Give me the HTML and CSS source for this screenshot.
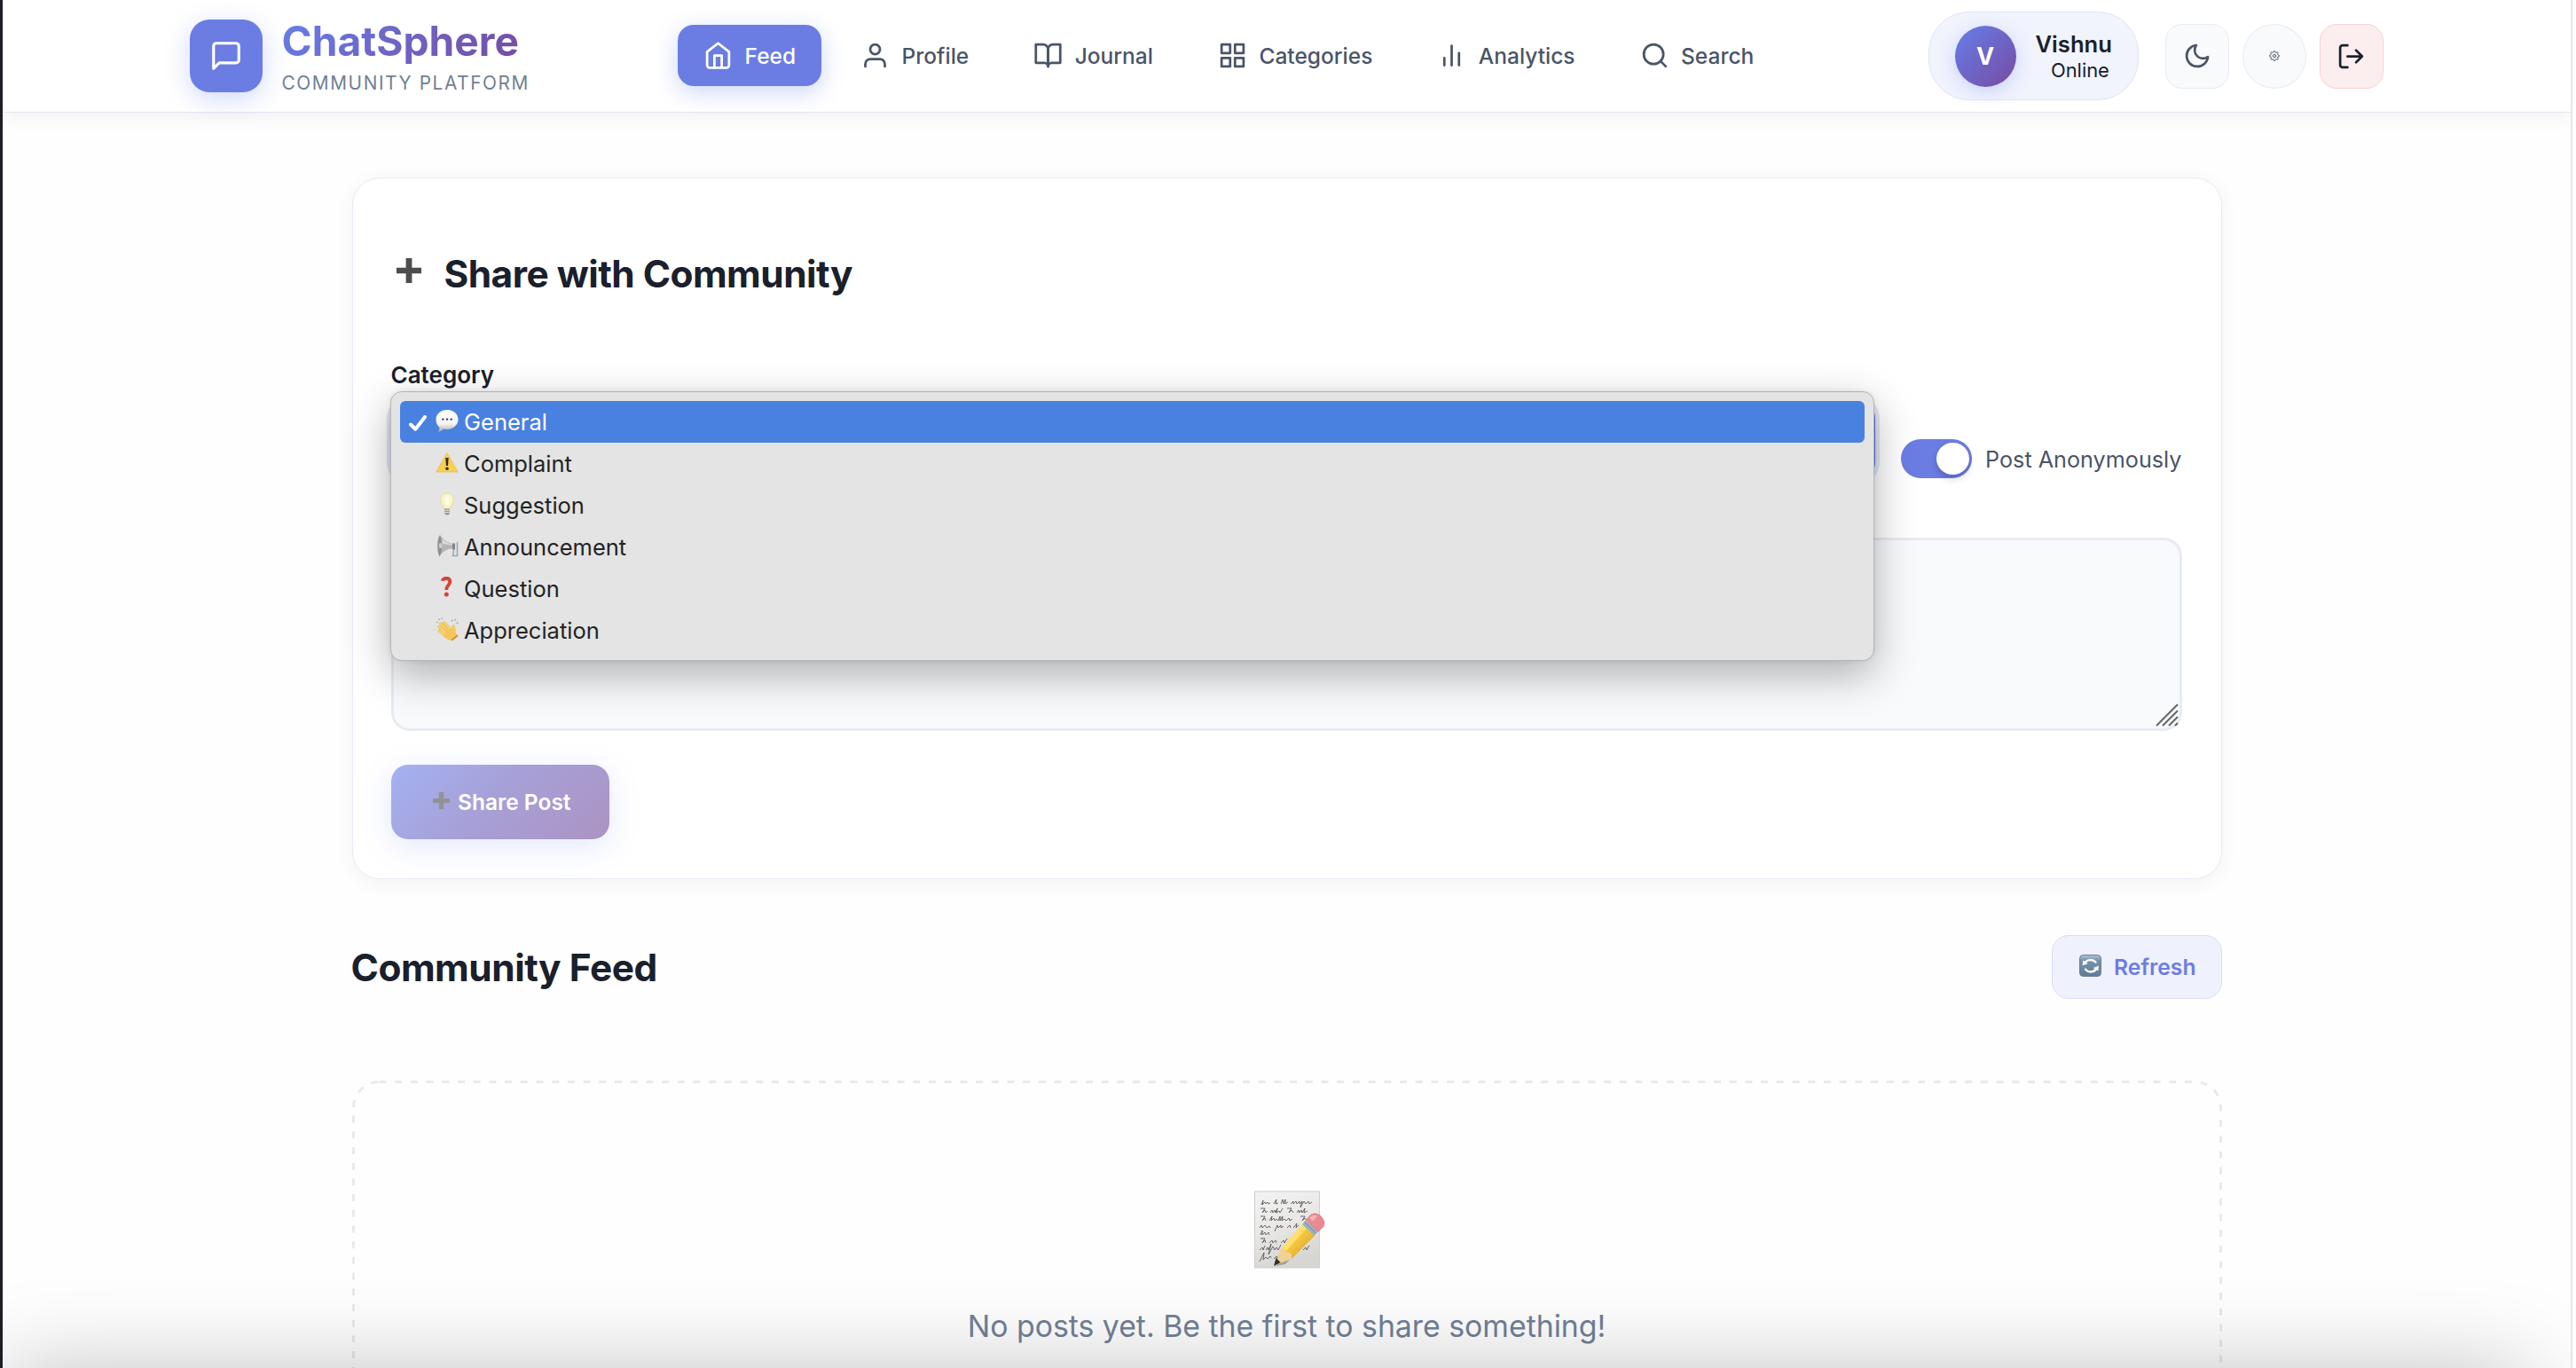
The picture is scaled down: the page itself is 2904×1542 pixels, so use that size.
FILE: index.html
```
<!DOCTYPE html>
<html lang="en">
<head>
<meta charset="utf-8">
<title>ChatSphere</title>
<link rel="stylesheet" href="styles.css">
</head>
<body>
<div class="page">
  <header class="header">
    <div class="brand">
      <div class="brand-mark">
        <svg class="icon brand-icon" viewBox="0 0 24 24"><path d="M21 15a2 2 0 0 1-2 2H7l-4 4V5a2 2 0 0 1 2-2h14a2 2 0 0 1 2 2z"/></svg>
      </div>
      <div class="brand-text">
        <div class="brand-name">ChatSphere</div>
        <div class="brand-tag">COMMUNITY PLATFORM</div>
      </div>
    </div>
    <nav class="nav">
      <a class="nav-item active"><svg class="icon" viewBox="0 0 24 24"><path d="M3 9l9-7 9 7v11a2 2 0 0 1-2 2H5a2 2 0 0 1-2-2z"/><path d="M9 22V12h6v10"/></svg>Feed</a>
      <a class="nav-item"><svg class="icon" viewBox="0 0 24 24"><path d="M20 21v-2a4 4 0 0 0-4-4H8a4 4 0 0 0-4 4v2"/><circle cx="12" cy="7" r="4"/></svg>Profile</a>
      <a class="nav-item"><svg class="icon" viewBox="0 0 24 24"><path d="M2 3h6a4 4 0 0 1 4 4v14a3 3 0 0 0-3-3H2z"/><path d="M22 3h-6a4 4 0 0 0-4 4v14a3 3 0 0 1 3-3h7z"/></svg>Journal</a>
      <a class="nav-item"><svg class="icon" viewBox="0 0 24 24"><path d="M3 3h7v7H3zM14 3h7v7h-7zM14 14h7v7h-7zM3 14h7v7H3z"/></svg>Categories</a>
      <a class="nav-item"><svg class="icon" viewBox="0 0 24 24"><path d="M18 20V10M12 20V4M6 20v-6"/></svg>Analytics</a>
      <a class="nav-item"><svg class="icon" viewBox="0 0 24 24"><circle cx="11" cy="11" r="8"/><path d="M21 21l-4.35-4.35"/></svg>Search</a>
    </nav>
    <div class="account">
      <div class="user-pill">
        <div class="avatar">V</div>
        <div class="user-text">
          <div class="user-name">Vishnu</div>
          <div class="user-status">Online</div>
        </div>
      </div>
      <div class="actions">
        <button class="action"><svg class="icon moon" viewBox="0 0 24 24"><path d="M21 12.79A9 9 0 1 1 11.21 3 7 7 0 0 0 21 12.79z"/></svg></button>
        <button class="action round"><svg class="icon gear" viewBox="0 0 24 24"><circle cx="12" cy="12" r="3.2"/><path d="M19.4 15a1.65 1.65 0 0 0 .33 1.82l.06.06a2 2 0 1 1-2.83 2.83l-.06-.06a1.65 1.65 0 0 0-2.8 1.17V21a2 2 0 0 1-4 0v-.09a1.65 1.65 0 0 0-2.9-1.17l-.06.06a2 2 0 1 1-2.83-2.83l.06-.06A1.65 1.65 0 0 0 3.09 14H3a2 2 0 0 1 0-4h.09a1.65 1.65 0 0 0 1.17-2.9l-.06-.06a2 2 0 1 1 2.83-2.83l.06.06A1.65 1.65 0 0 0 10 3.09V3a2 2 0 0 1 4 0v.09a1.65 1.65 0 0 0 2.8 1.17l.06-.06a2 2 0 1 1 2.83 2.83l-.06.06A1.65 1.65 0 0 0 20.91 10H21a2 2 0 0 1 0 4h-.09a1.65 1.65 0 0 0-1.51 1z"/></svg></button>
        <button class="action logout"><svg class="icon" viewBox="0 0 24 24"><path d="M9 21H5a2 2 0 0 1-2-2V5a2 2 0 0 1 2-2h4"/><path d="M16 17l5-5-5-5M21 12H9"/></svg></button>
      </div>
    </div>
  </header>

  <main class="main">
    <section class="card">
      <h2 class="card-title">
        <svg class="title-plus" viewBox="0 0 28 28"><path d="M10.6 0h6.8v10.8H28v6.4H17.4V28h-6.8V17.2H0v-6.4h10.6z"/></svg>
        <span>Share with Community</span>
      </h2>
      <div class="form-row">
        <div class="field">
          <label class="field-label">Category</label>
          <div class="select-wrap">
            <div class="select"></div>
            <div class="menu">
              <div class="option selected">
                <svg class="check" viewBox="0 0 20 18"><path d="M2 10.5l5.4 5.2L18 2"/></svg>
                <svg class="emoji" viewBox="0 0 26 26"><defs><linearGradient id="bub" x2="0" y2="1"><stop offset="0" stop-color="#fff"/><stop offset=".65" stop-color="#f4f4f4"/><stop offset="1" stop-color="#a9a9a9"/></linearGradient></defs><path fill="url(#bub)" d="M13 1c7 0 12.500 4.600 12.500 10.800S20 23 13 23c-1.500 0-3-.2-4.200-.6C7.400 24.200 5 25.500 2.600 25.600c1.200-1.300 1.900-3 1.900-4.700C2 18.900.5 15.600.5 11.800.5 5.600 6 1 13 1z"/><g fill="#3b3b3b"><circle cx="8.300" cy="11.600" r="1.200"/><circle cx="13" cy="11.600" r="1.200"/><circle cx="17.700" cy="11.600" r="1.200"/></g></svg>
                <span>General</span>
              </div>
              <div class="option">
                <i class="check"></i>
                <svg class="emoji" viewBox="0 0 26 26"><path fill="#f7d050" stroke="#eac04a" stroke-width=".8" stroke-linejoin="round" d="M13 2.500L25.300 24H.7z"/><path fill="#2d2a1e" d="M11.300 8h3.400l-.7 9h-2z"/><circle cx="13" cy="20.200" r="1.700" fill="#2d2a1e"/></svg>
                <span>Complaint</span>
              </div>
              <div class="option">
                <i class="check"></i>
                <svg class="emoji" viewBox="0 0 26 26"><path fill="#fcf4c6" stroke="#eadb92" stroke-width=".9" d="M13 .8c4.200 0 7.300 3.100 7.300 7.200 0 4.600-3.500 6.400-4 10.200H9.700C9.200 14.400 5.700 12.600 5.700 8 5.700 3.900 8.800.8 13 .8z"/><path fill="#fffef4" d="M10.500 5.500q2.500-2 5 0l-1 9h-3z"/><path fill="#9a9a96" d="M10 18.600h6v4.600L14.500 25.500h-3L10 23.200z"/><path stroke="#d9d9d6" stroke-width="1" d="M10 20.300h6M10 22.500h6"/></svg>
                <span>Suggestion</span>
              </div>
              <div class="option">
                <i class="check"></i>
                <svg class="emoji" viewBox="0 0 26 26"><path fill="#b3b5b7" d="M5 1c4 6 9 9 15 10v5.500c-6 0-11 2-15.500 8.500C1.500 21.500.5 5.500 5 1z"/><path fill="#8e9193" d="M5 1.500c3 6 3 18-.5 24C2 20 1.500 6 5 1.500z"/><path fill="#d8d9da" d="M7 5c4 4 8 6 13 6.500V13L8 11z"/><ellipse cx="5.700" cy="13" rx="2" ry="3" fill="#c9cacb"/><path fill="none" stroke="#9aaab6" stroke-width="1.600" d="M24.500 9v15.500h-5l1-7"/><path fill="#7f868b" d="M19 10.500h3v7h-3z"/></svg>
                <span>Announcement</span>
              </div>
              <div class="option">
                <i class="check"></i>
                <svg class="emoji" viewBox="0 0 26 26"><path fill="none" stroke="#d54437" stroke-width="3.800" d="M7.700 5.800C8.500 2.500 16 1.400 16.300 6.500c.2 4-4.200 4-4 9.500"/><circle cx="12.300" cy="20.900" r="2.500" fill="#d54437"/></svg>
                <span>Question</span>
              </div>
              <div class="option">
                <i class="check"></i>
                <svg class="emoji" viewBox="0 0 26 26"><g fill="none" stroke-linecap="round"><path stroke="#e9b84f" stroke-width="3.400" d="M4 10.500l10 10M4.500 15l9 7.500M5.800 7l10 10M9.500 6l9 9"/><path stroke="#f6d272" stroke-width="2.400" d="M4 10.500l10 10M4.500 15l9 7.500M5.800 7l10 10M9.500 6l9 9"/></g><path fill="#f3c75d" d="M12 11l5.500 2.500L19.500 8c1.600-.2 2.600 1 2.700 2.600l.6 6.400 2.700 4-6.500 5c-4 0-8-2.500-10-5z"/><path fill="#c98e3a" d="M25.500 21l-6.500 5-2-.6 7.500-6z"/><g stroke="#9b9b9b" stroke-width="1.300"><path d="M1 5l1.500.8M3.500 1.500l.9 1.500M7 .5l.2 1.500M18 3l1.200 1.200M22 1.700v1.800M25.300 6l-1.700.4"/></g></svg>
                <span>Appreciation</span>
              </div>
            </div>
          </div>
        </div>
        <div class="toggle-group">
          <div class="toggle"><div class="knob"></div></div>
          <span class="toggle-label">Post Anonymously</span>
        </div>
      </div>
      <div class="textarea">
        <svg class="resizer" viewBox="0 0 26 26"><path d="M1 25L25 1M8 25L25 8M15 25l10-10M22 25l3-3"/></svg>
      </div>
      <button class="share">
        <svg class="share-plus" viewBox="0 0 19 19"><path d="M6.800 0h5.400v6.900H19v5.200h-6.800V19H6.800v-6.900H0V6.900h6.800z"/></svg>
        <span>Share Post</span>
      </button>
    </section>

    <div class="feed-head">
      <h2 class="feed-title">Community Feed</h2>
      <button class="refresh">
        <svg class="refresh-icon" viewBox="0 0 25 25"><defs><linearGradient id="ref" x2="0" y2="1"><stop offset="0" stop-color="#b4c6d8"/><stop offset=".25" stop-color="#7893ac"/><stop offset="1" stop-color="#5f7c97"/></linearGradient></defs><rect x=".5" y=".5" width="24" height="24" rx="4" fill="url(#ref)" stroke="#667f98"/><g fill="none" stroke="#fff" stroke-width="2.300"><path d="M6 10.500a7 6.200 0 0 1 13-1"/><path d="M19.500 15a7 6.200 0 0 1-13 .8"/></g><path fill="#fff" d="M3.500 12.200l.8-5.700 5.500 3.800zM22 12.800l-.6 5.500-5.700-3.200z"/></svg>
        <span>Refresh</span>
      </button>
    </div>

    <section class="empty">
      <svg class="empty-outline"><rect x="1.500" y="1.500" width="2105" height="447" rx="29"/></svg>
      <svg class="memo" viewBox="0 0 80 88">
        <defs>
          <linearGradient id="paper" x2=".3" y2="1"><stop offset="0" stop-color="#f3f3f3"/><stop offset=".5" stop-color="#e9e8e6"/><stop offset="1" stop-color="#d8d6d3"/></linearGradient>
          <linearGradient id="wood" x2="1" y2="1"><stop offset="0" stop-color="#ffdf5e"/><stop offset=".5" stop-color="#f4c43c"/><stop offset="1" stop-color="#c8942a"/></linearGradient>
        </defs>
        <rect x=".5" y="1" width="73" height="86" fill="url(#paper)" stroke="#cfcecb"/>
        <g fill="none" stroke="#4a4a4a" stroke-width=".8">
          <path d="M8 16l2-5-1 5 3-3 1 2 2-2 1 2 2-1M22 15l3-5-1 5 3-1M30 15l2-5 1 5 2-5v5l3-2M41 15l3-3 0 3 3-3 1 3 3-3 0 3 3-3-2 7 4-7 2 3 3-3 1 3 3-2"/>
          <path d="M7 20h5l-3 5 3-3 1 3 2-2M18 25l2-3 1 3 2-3 1 3 2-5-1 5 3-2 1 2 3-5M37 20h5l-3 5 3-3 2 3M48 25l2-3 1 3 2-3 1 3 3-5-1 5 4-2"/>
          <path d="M7 29h5l-3 5 3-3 1 3M17 34l3-5-1 5 3-3 1 3 2-2 2 2 2-5v5l3-5-1 5 3-2 2 2 3-3 1 3 3-2M52 29h5l-3 5 3-3 2 3"/>
          <path d="M6 42l2-3 1 3 3-3 2 3 3-2 1 2M23 46l3-7 1 3 3-3 0 3 3-2M37 42l3-3 1 3M44 42l4-5-1 5 3-3"/>
          <path d="M7 50l2-5 0 5 3-3 1 3 3-3 1 3M7 54h5l-3 5 3-3 1 3M17 59l3-3 1 3 3-3 1 3M30 59l3-3 1 3 3-5"/>
          <path d="M6 67l3-3 1 3 2-5M13 67l2-3 1 3 3-7-3 12 5-9 2 4 2-3 2 3 3-6M55 67l3-3 1 3 3-5"/>
          <path d="M6 80l5-10-1 8 3-3 2 2 3-3 1 2M22 77l3-3 1 3 3-6"/>
        </g>
        <path fill="#777" opacity=".55" d="M24 85l11-2 42-43-4-2z"/>
        <path fill="url(#wood)" d="M54 38l14 13-26 26-12-11z"/>
        <path fill="#ffdf70" d="M54 38l5 4.500L34 70l-4-4z"/>
        <path fill="#efd294" d="M30 66l4-1 3 5 5 1v6L23 84z"/>
        <path fill="#2e2c2c" d="M24.500 76l5 5L22 85z"/>
        <path fill="#9fb1c4" d="M58 33.500l14 12.500-4.500 5L54 38z"/>
        <path fill="none" stroke="#718294" stroke-width="1" d="M56.500 35.500l13 12.500"/>
        <path fill="#e98990" stroke="#c96d76" stroke-width=".6" d="M58.500 33l5-5.500c4-3 9-1.500 12.500 2.500 3.500 4.500 4 8 1 11.500l-5 5z"/>
        <path fill="#f4b1b3" d="M62 31c3-4 7-4 9-2l-5 6z"/>
      </svg>
      <p class="empty-text">No posts yet. Be the first to share something!</p>
    </section>
  </main>
  <div class="bottom-shade"></div>
</div>
</body>
</html>
```

FILE: styles.css
```
* { box-sizing: border-box; }

body {
  margin: 0;
  background: #fefefe;
  color: #1a202c;
  font-family: Inter, "Liberation Sans", sans-serif;
}

h2, p { margin: 0; }

button {
  font: inherit;
  padding: 0;
}

.page {
  position: relative;
  height: 1542px;
  margin-right: 4px;
  overflow: hidden;
  border-left: 3px solid #1f1c24;
  border-right: 2px solid #e6e6e6;
}

.icon {
  width: 33px;
  height: 33px;
  flex: none;
  fill: none;
  stroke: currentColor;
  stroke-width: 2;
  stroke-linecap: round;
  stroke-linejoin: round;
}

/* Header */
.header {
  display: flex;
  align-items: center;
  justify-content: space-between;
  height: 127px;
  padding: 0 211px;
  background: #fff;
  border-bottom: 1px solid #e6e8f2;
  box-shadow: 0 4px 22px rgba(0, 0, 0, .06);
}

.brand {
  display: flex;
  align-items: center;
  gap: 21.500px;
}

.brand-mark {
  display: flex;
  align-items: center;
  justify-content: center;
  width: 82px;
  height: 82px;
  border-radius: 22px;
  color: #fff;
  background: #6b7de3;
  box-shadow: 0 7px 28px rgba(102, 126, 234, .3);
}

.brand-icon { width: 38px; height: 38px; }

.brand-text { padding-top: 1px; }

.brand-name {
  width: max-content;
  font-size: 46.200px;
  font-weight: 700;
  line-height: 56px;
  background: linear-gradient(135deg, #667eea, #764ba2);
  -webkit-background-clip: text;
  background-clip: text;
  color: transparent;
}

.brand-tag {
  margin-top: 4px;
  font-size: 20.800px;
  line-height: 32px;
  letter-spacing: 1.600px;
  color: #718096;
}

.nav {
  display: flex;
  gap: 15px;
}

.nav-item {
  display: flex;
  align-items: center;
  gap: 13.500px;
  height: 69px;
  margin-bottom: 1px;
  padding: 0 29px;
  border-radius: 18px;
  font-size: 24.500px;
  font-weight: 500;
  color: #4a5568;
}

.nav-item.active {
  color: #fff;
  background: #6b7de3;
  box-shadow: 0 7px 26px rgba(102, 126, 234, .32);
}

.account {
  display: flex;
  align-items: center;
  gap: 30px;
}

.user-pill {
  display: flex;
  align-items: center;
  gap: 22px;
  width: 237px;
  height: 100px;
  padding-left: 29px;
  border: 1px solid #dfe3f8;
  border-radius: 46px;
  background: #f1f4fd;
}

.avatar {
  display: flex;
  align-items: center;
  justify-content: center;
  width: 69px;
  height: 69px;
  border-radius: 50%;
  font-size: 27px;
  font-weight: 700;
  color: #fff;
  background: linear-gradient(135deg, #667eea, #764ba2);
  box-shadow: 0 5px 20px rgba(102, 126, 234, .3);
}

.user-text { text-align: right; }

.user-name {
  font-size: 25.600px;
  font-weight: 600;
  line-height: 32px;
}

.user-status {
  padding-right: 3px;
  font-size: 21.900px;
  line-height: 27px;
}

.actions {
  display: flex;
  gap: 14.500px;
}

.action {
  display: flex;
  align-items: center;
  justify-content: center;
  width: 72.500px;
  height: 73px;
  border: 1px solid #e8ecf1;
  border-radius: 19px;
  color: #4a5568;
  background: #f8fafc;
}

.action.round { border-radius: 50%; }

.action.logout {
  color: #1a202c;
  border-color: #f8d2d2;
  background: #fceeee;
}

.moon { width: 32px; height: 32px; }
.gear { width: 12px; height: 12px; }

/* Composer card */
.main {
  width: 2108px;
  margin: 73px auto 0;
}

.card {
  height: 791px;
  padding: 76px 44px 0 43px;
  border: 1px solid #e8ebf5;
  border-radius: 31px;
  background: #fff;
  box-shadow: 0 4px 22px rgba(0, 0, 0, .05);
}

.card-title {
  display: flex;
  align-items: center;
  gap: 26px;
  height: 64px;
  padding-left: 6px;
  font-size: 42.400px;
  font-weight: 700;
  line-height: 64px;
  letter-spacing: -.520px;
}

.title-plus {
  width: 28px;
  height: 28px;
  margin-bottom: 8px;
  fill: #4d4d4d;
}

.form-row {
  display: flex;
  align-items: flex-end;
  gap: 29px;
  margin-top: 66px;
}

.field { flex: 1; }

.field-label {
  display: block;
  margin-bottom: 11px;
  font-size: 26px;
  font-weight: 600;
  line-height: 32px;
}

.select-wrap { position: relative; }

.select {
  height: 93px;
  border: 3px solid #5d6fd6;
  border-radius: 22px;
  background: #fff;
  box-shadow: 0 0 0 5px #e3e7f9;
}

.menu {
  position: absolute;
  z-index: 5;
  top: -9px;
  left: -1px;
  right: 1.500px;
  height: 304px;
  padding: 10px;
  border: 1px solid #b5b5b5;
  border-radius: 13px;
  background: #e4e4e4;
  box-shadow: 0 16px 48px rgba(0, 0, 0, .3), 0 0 6px rgba(0, 0, 0, .08);
}

.option {
  display: flex;
  align-items: center;
  height: 47px;
  padding: 0 0 1px 10px;
  border-radius: 6px;
  font-size: 25.500px;
  color: #232323;
}

.option.selected {
  color: #fff;
  background: #4981e1;
}

.check {
  width: 20px;
  height: 18px;
  margin: 4px 10px 0 0;
  fill: none;
  stroke: #fff;
  stroke-width: 4;
  stroke-linecap: round;
  stroke-linejoin: round;
}

.emoji {
  width: 26px;
  height: 26px;
  margin: -2px 6.500px 0 0;
}

.toggle-group {
  display: flex;
  align-items: center;
  gap: 15px;
  margin-bottom: 4px;
}

.toggle {
  width: 80px;
  height: 44px;
  padding: 4px 3px;
  border-radius: 22px;
  background: #6b7de3;
}

.knob {
  width: 37px;
  height: 36px;
  margin-left: auto;
  border-radius: 50%;
  background: #fff;
  box-shadow: 0 4px 9px rgba(0, 0, 0, .2);
}

.toggle-label {
  padding-top: 1px;
  font-size: 25.200px;
  line-height: 44px;
  color: #4a5568;
  margin-bottom: -1px;
}

.textarea {
  display: flex;
  align-items: flex-end;
  justify-content: flex-end;
  height: 218px;
  margin-top: 63px;
  padding: 2px 1px 2px 2px;
  border: 3px solid #e8ebf1;
  border-radius: 21px;
  background: #f8fafc;
}

.resizer {
  width: 26px;
  height: 26px;
  fill: none;
  stroke: #666;
  stroke-width: 2;
}

.share {
  display: flex;
  align-items: center;
  gap: 9.500px;
  width: 246px;
  height: 84px;
  margin-top: 38px;
  padding-left: 47px;
  border: 0;
  border-radius: 19px;
  font-size: 24.500px;
  font-weight: 600;
  color: #fff;
  background: linear-gradient(135deg, #a3b2f2, #a7a0d8 45%, #ab93c2);
  box-shadow: 0 8px 34px rgba(102, 126, 234, .18);
}

.share-plus {
  width: 19px;
  height: 19px;
  margin-bottom: 3px;
  fill: #929294;
}

/* Feed */
.feed-head {
  display: flex;
  align-items: center;
  justify-content: space-between;
  margin-top: 63px;
}

.feed-title {
  margin-left: -1px;
  padding-top: 2px;
  font-size: 42.400px;
  font-weight: 700;
  line-height: 52px;
  letter-spacing: -.480px;
}

.refresh {
  display: flex;
  align-items: center;
  gap: 14.500px;
  width: 192px;
  height: 72px;
  padding-left: 30px;
  border: 1px solid #d8def8;
  border-radius: 19px;
  font-size: 24.700px;
  font-weight: 600;
  color: #6b7de3;
  background: #eff1fd;
}

.refresh-icon {
  width: 25px;
  height: 25px;
  margin-bottom: 3px;
}

.empty {
  position: relative;
  display: flex;
  flex-direction: column;
  align-items: center;
  height: 450px;
  margin-top: 92px;
  padding-top: 124px;
}

.empty-outline {
  position: absolute;
  inset: 0;
  width: 100%;
  height: 100%;
  fill: none;
  stroke: #e6eaf0;
  stroke-width: 3;
  stroke-dasharray: 8 9.700;
}

.memo {
  width: 80px;
  height: 88px;
  margin-left: 6px;
}

.empty-text {
  margin-top: 44px;
  font-size: 33.800px;
  line-height: 42px;
  color: #718096;
}

/* Soft shadow rising from the lower window edge */
.bottom-shade {
  position: absolute;
  z-index: 10;
  top: 1550px;
  left: 0;
  right: 50px;
  height: 200px;
  box-shadow: 0 0 105px rgba(0, 0, 0, .27);
}
```
